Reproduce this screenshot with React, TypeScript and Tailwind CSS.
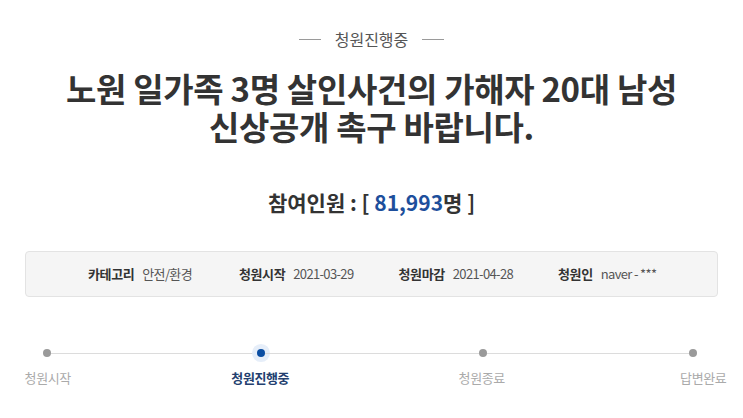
import React from "react";

// 청원 상세 헤더 — 상태, 제목, 참여인원, 정보 박스, 진행 단계

const FONT = { fontFamily: '"Noto Sans CJK KR", "Noto Sans", sans-serif' };

const INFO = [
  { label: "카테고리", value: "안전/환경", ml: "ml-[62px]" },
  { label: "청원시작", value: "2021-03-29", ml: "ml-[47px]" },
  { label: "청원마감", value: "2021-04-28", ml: "ml-[45px]" },
  { label: "청원인", value: "naver - ***", ml: "ml-[45px]" },
];

function Dot({ active }: { active?: boolean }) {
  if (active) {
    return (
      <div className="w-2 h-2 rounded-full bg-[#0b4ea2] shadow-[0_0_0_5px_#e6eef9] shrink-0" />
    );
  }
  return <div className="w-2 h-2 rounded-full bg-[#9a9a9a] shrink-0" />;
}

export default function App() {
  return (
    <div className="w-[743px] h-[418px] bg-white overflow-hidden" style={FONT}>
      {/* status tag */}
      <div className="flex items-center justify-center pt-[27px] gap-[14px]">
        <div className="w-[22px] h-px bg-[#9a9a9a]" />
        <span className="text-[16px] leading-[24px] text-[#555]">청원진행중</span>
        <div className="w-[22px] h-px bg-[#9a9a9a]" />
      </div>

      {/* title */}
      <h1 className="mt-[18px] text-center text-[33px] leading-[38px] font-bold text-[#333] tracking-[-0.01em]">
        노원 일가족 3명 살인사건의 가해자 20대 남성
        <br />
        신상공개 촉구 바랍니다.
      </h1>

      {/* counter */}
      <div className="mt-[42px] text-center text-[21px] leading-[30px] font-bold text-[#333]">
        참여인원 : [ <span className="text-[#1d4f9c]">81,993</span>명 ]
      </div>

      {/* info box */}
      <div className="mx-[25px] mt-[34px] h-[46px] rounded-[4px] border border-[#e3e3e3] bg-[#f5f5f5] flex items-center text-[13px] text-[#444]">
        {INFO.map((it) => (
          <div key={it.label} className={`flex items-center ${it.ml}`}>
            <span className="font-bold text-[#333] tracking-[-0.03em]">{it.label}</span>
            <span className="ml-[8px] tracking-[-0.05em] text-[#555]">{it.value}</span>
          </div>
        ))}
      </div>

      {/* progress */}
      <div className="mt-[52px] flex items-center ml-[43px]">
        <Dot />
        <div className="w-[206px] h-px bg-[#dcdcdc]" />
        <Dot active />
        <div className="w-[214px] h-px bg-[#dcdcdc]" />
        <Dot />
        <div className="w-[202px] h-px bg-[#dcdcdc]" />
        <Dot />
      </div>
      <div className="mt-[11px] flex items-center pl-[8px] text-[13px] leading-[20px] tracking-[-0.03em]">
        <div className="w-[80px] text-center text-[#aaa]">청원시작</div>
        <div className="w-[80px] text-center ml-[133px] font-bold text-[#23406f]">청원진행중</div>
        <div className="w-[80px] text-center ml-[142px] text-[#aaa]">청원종료</div>
        <div className="w-[80px] text-center ml-[142px] text-[#aaa]">답변완료</div>
      </div>
    </div>
  );
}
